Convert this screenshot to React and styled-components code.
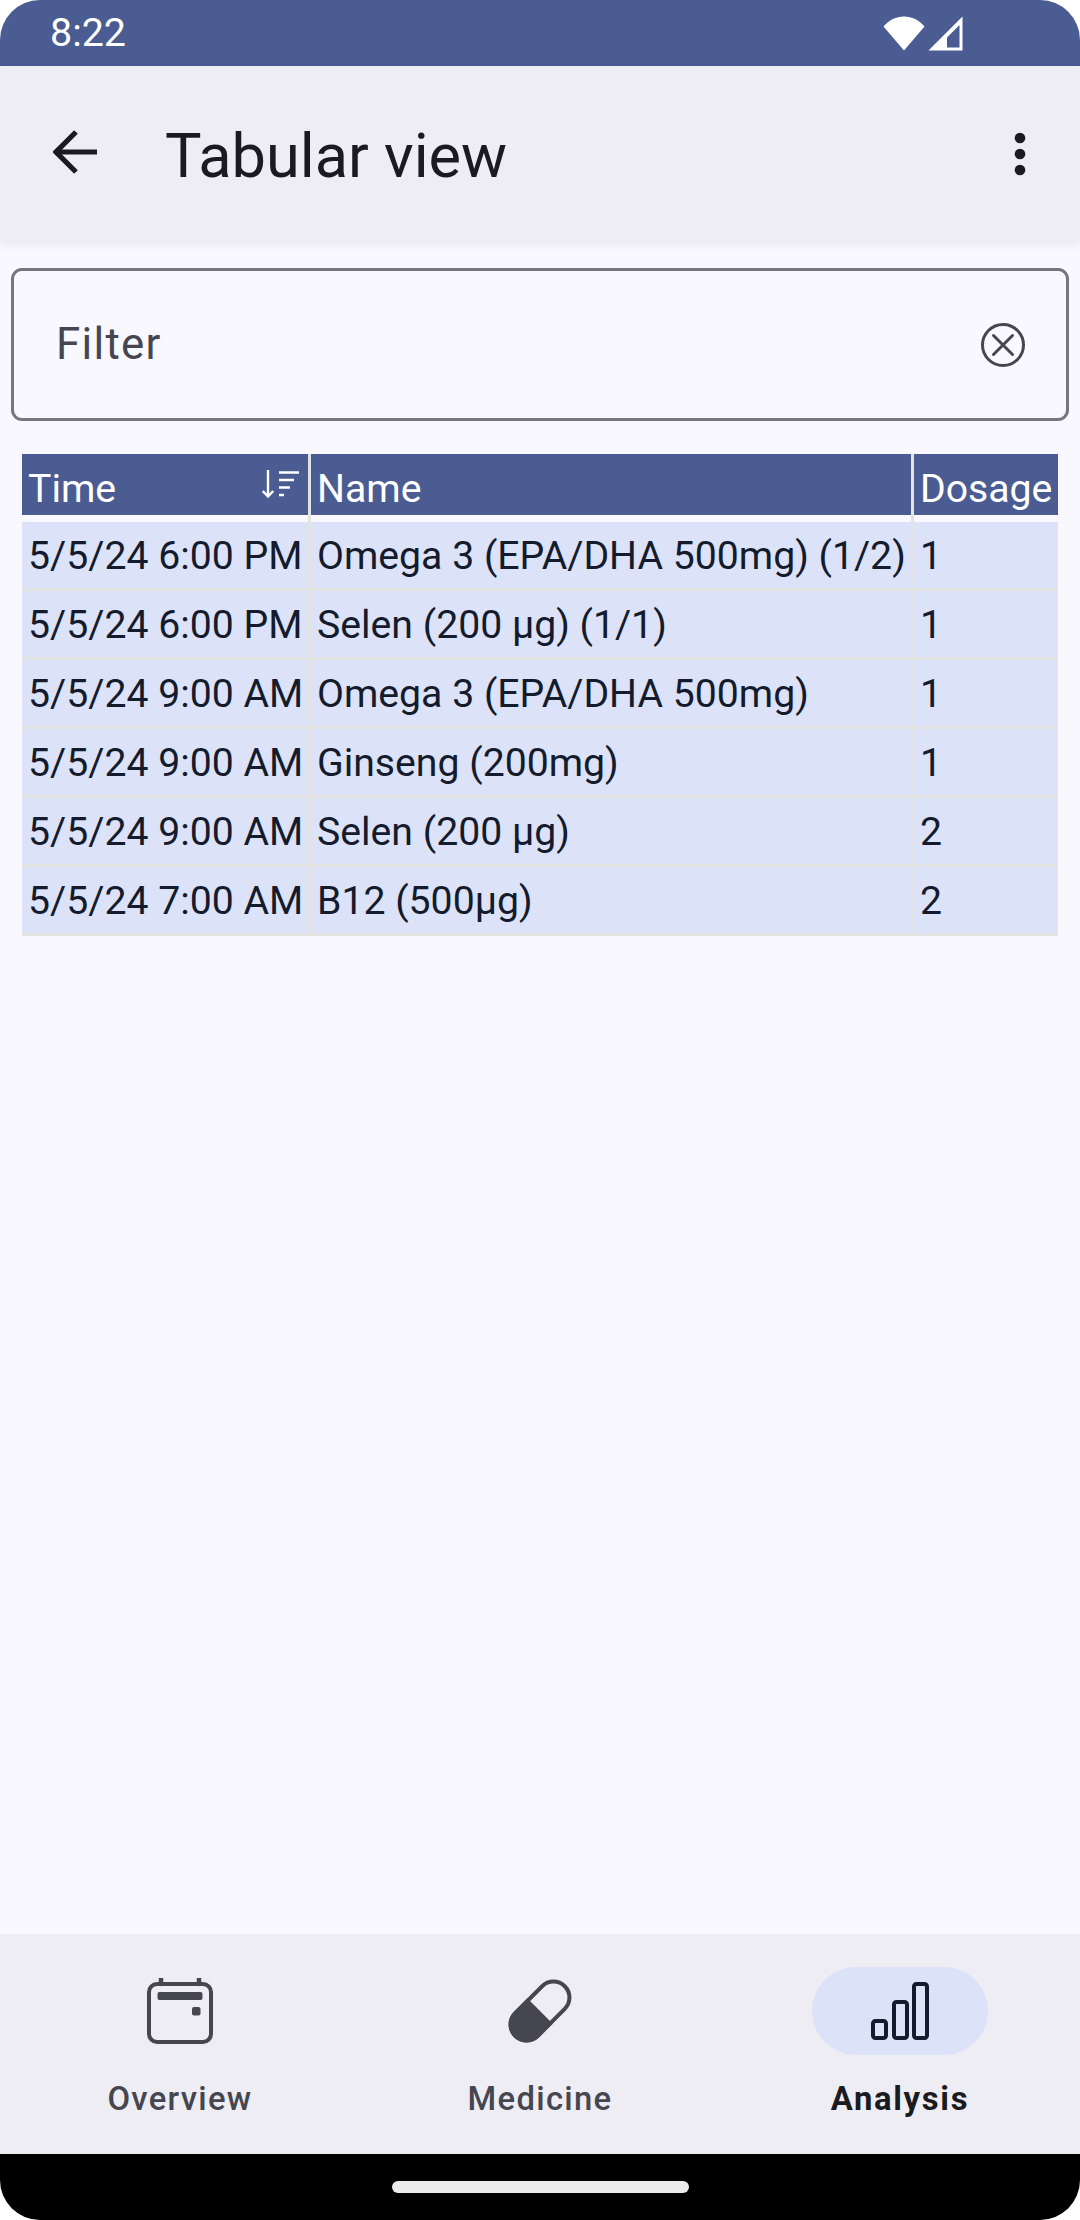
import React from "react";
import styled, { createGlobalStyle } from "styled-components";

const Global = createGlobalStyle`
  html, body { margin: 0; padding: 0; background: #ffffff; }
  * { box-sizing: border-box; }
  body { font-family: Roboto, "Noto Sans", sans-serif; }
`;

const Phone = styled.div`
  width: 1080px;
  height: 2220px;
  display: flex;
  flex-direction: column;
  overflow: hidden;
  border-radius: 40px;
  background: #faf8ff;
`;

const StatusBar = styled.header`
  height: 66px;
  flex: none;
  display: flex;
  align-items: center;
  justify-content: space-between;
  padding: 0 117px 0 50px;
  background: #4a5c92;
  color: #ffffff;
`;

const Clock = styled.span`
  font-size: 39.4px;
  line-height: 68px;
`;

const StatusIcons = styled.div`
  display: flex;
  align-items: center;
  gap: 3px;
  height: 66px;
`;

const AppBar = styled.div`
  position: relative;
  height: 176px;
  flex: none;
  display: flex;
  align-items: center;
  padding: 0 54px 0 53px;
  background: #eeedf4;
  box-shadow: 0 3px 10px rgba(30, 30, 50, 0.08);
`;

const BackIcon = styled.svg`
  width: 44px;
  height: 44px;
  flex: none;
  margin-top: -4px;
`;

const Title = styled.h1`
  flex: 1;
  margin: 4px 0 0 68px;
  font-size: 61.3px;
  font-weight: 400;
  line-height: 70px;
  color: #1a1b20;
`;

const Kebab = styled.svg`
  width: 12px;
  height: 44px;
  flex: none;
  margin-top: -1px;
`;

const Content = styled.main`
  flex: 1;
  padding: 26px 11px 0;
`;

const FilterBox = styled.div`
  height: 153px;
  display: flex;
  align-items: center;
  justify-content: space-between;
  padding: 0 41px 0 42px;
  border: 3px solid #767680;
  border-radius: 11px;
`;

const FilterLabel = styled.span`
  font-size: 43.8px;
  line-height: 52px;
  margin-top: -2px;
  letter-spacing: 1.3px;
  color: #45464f;
`;

const ClearIcon = styled.svg`
  width: 44px;
  height: 44px;
  flex: none;
`;

const Table = styled.div`
  margin: 33px 11px 0;
  display: flex;
  flex-direction: column;
`;

const Row = styled.div`
  display: grid;
  grid-template-columns: 289px 603px 144px;
`;

const HeadCell = styled.div`
  height: 68px;
  padding-bottom: 7px;
  border-right: ${(p) => (p.$last ? "none" : "3px solid #e3e3e3")};
`;

const HeadInner = styled.div`
  height: 61px;
  display: flex;
  align-items: center;
  justify-content: space-between;
  padding: 9px 9px 0 6px;
  background: #4a5c92;
  color: #ffffff;
  font-size: 39.2px;
  white-space: nowrap;
`;

const SortIcon = styled.svg`
  width: 37px;
  height: 28px;
  flex: none;
  margin-top: -10px;
`;

const Cell = styled.div`
  height: 69px;
  display: flex;
  align-items: center;
  padding: 2px 0 0 6px;
  background: #dce2f8;
  background-clip: padding-box;
  border-bottom: 3px solid #e3e3e3;
  border-right: ${(p) => (p.$last ? "none" : "3px solid #e3e3e3")};
  color: #141b2c;
  font-size: 39.2px;
  white-space: nowrap;
`;

const BottomNav = styled.nav`
  height: 220px;
  flex: none;
  display: grid;
  grid-template-columns: repeat(3, 360px);
  background: #eeedf4;
`;

const NavItem = styled.div`
  display: flex;
  flex-direction: column;
  align-items: center;
  padding-top: 33px;
`;

const IconPill = styled.div`
  width: 176px;
  height: 88px;
  display: flex;
  align-items: center;
  justify-content: center;
  border-radius: 44px;
  background: ${(p) => (p.$active ? "#dce2f8" : "transparent")};
`;

const NavLabel = styled.span`
  margin-top: 22px;
  font-size: 32.8px;
  line-height: 44px;
  letter-spacing: ${(p) => (p.$active ? "1.7px" : "1.3px")};
  font-weight: ${(p) => (p.$active ? 700 : 500)};
  color: ${(p) => (p.$active ? "#1a1b20" : "#45464f")};
`;

const GestureBar = styled.div`
  height: 66px;
  flex: none;
  display: flex;
  justify-content: center;
  padding-top: 27px;
  background: #000000;
`;

const HomePill = styled.div`
  width: 297px;
  height: 12px;
  border-radius: 6px;
  background: #ebebeb;
`;

const rows = [
  ["5/5/24 6:00 PM", "Omega 3 (EPA/DHA 500mg) (1/2)", "1"],
  ["5/5/24 6:00 PM", "Selen (200 µg) (1/1)", "1"],
  ["5/5/24 9:00 AM", "Omega 3 (EPA/DHA 500mg)", "1"],
  ["5/5/24 9:00 AM", "Ginseng (200mg)", "1"],
  ["5/5/24 9:00 AM", "Selen (200 µg)", "2"],
  ["5/5/24 7:00 AM", "B12 (500µg)", "2"],
];

const Wifi = () => (
  <svg width="42" height="36" viewBox="0 0 42 36">
    <path d="M0.5 11.5C6 5 13 1.5 21 1.5S36 5 41.500 11.500L21 35.500Z" fill="#fff" />
  </svg>
);

const Signal = () => (
  <svg width="35" height="36" viewBox="0 0 35 36">
    <path d="M0.500 35.500L34.500 1.500V35.500Z" fill="#fff" />
    <path d="M19 32.500H31.500V10L19 22.500Z" fill="#4a5c92" />
  </svg>
);

const CalendarIcon = () => (
  <svg width="66" height="66" viewBox="0 0 66 66" fill="none">
    <rect x="2" y="6" width="62" height="58" rx="8" stroke="#45464f" strokeWidth="4" />
    <path d="M14 0.500V6M52 0.500V6" stroke="#45464f" strokeWidth="4.500" strokeLinecap="round" />
    <rect x="10.500" y="14" width="45" height="8" rx="2" fill="#45464f" />
    <rect x="45" y="29" width="8.500" height="8.500" rx="2" fill="#45464f" />
  </svg>
);

const PillIcon = () => (
  <svg width="66" height="66" viewBox="0 0 66 66" fill="none">
    <g transform="rotate(-45 33 33)">
      <rect x="-2" y="17" width="70" height="32" rx="16" stroke="#45464f" strokeWidth="4" />
      <path d="M33 15H14A18 18 0 0 0 14 51H33Z" fill="#45464f" />
    </g>
  </svg>
);

const BarsIcon = () => (
  <svg width="58" height="58" viewBox="0 0 58 58" fill="none" stroke="#141b2c" strokeWidth="4">
    <rect x="2" y="39" width="13" height="17" rx="2.500" />
    <rect x="23" y="20" width="13" height="36" rx="2.500" />
    <rect x="43" y="2" width="13" height="54" rx="2.500" />
  </svg>
);

export default function App() {
  return (
    <>
      <Global />
      <Phone>
        <StatusBar>
          <Clock>8:22</Clock>
          <StatusIcons>
            <Wifi />
            <Signal />
          </StatusIcons>
        </StatusBar>
        <AppBar>
          <BackIcon viewBox="0 0 44 44" fill="none" stroke="#1a1b20" strokeWidth="5.200">
            <path d="M44 22H4" />
            <path d="M23 2L3 22L23 42" />
          </BackIcon>
          <Title>Tabular view</Title>
          <Kebab viewBox="0 0 12 44" fill="#1a1b20">
            <circle cx="6" cy="6" r="5.300" />
            <circle cx="6" cy="22" r="5.300" />
            <circle cx="6" cy="38" r="5.300" />
          </Kebab>
        </AppBar>
        <Content>
          <FilterBox>
            <FilterLabel>Filter</FilterLabel>
            <ClearIcon viewBox="0 0 44 44" fill="none" stroke="#45464f">
              <circle cx="22" cy="22" r="20.500" strokeWidth="3" />
              <path d="M12.500 12.500L31.500 31.500M31.500 12.500L12.500 31.500" strokeWidth="3" strokeLinecap="round" />
            </ClearIcon>
          </FilterBox>
          <Table>
            <Row>
              <HeadCell>
                <HeadInner>
                  Time
                  <SortIcon viewBox="0 0 37 28" fill="none" stroke="#fff" strokeWidth="2.400">
                    <path d="M6 0V26.500M0.800 21L6 26.500L11.200 21" />
                    <path d="M17 2.500H37M17 10H32M17 17.500H28M17 25H22" />
                  </SortIcon>
                </HeadInner>
              </HeadCell>
              <HeadCell>
                <HeadInner>Name</HeadInner>
              </HeadCell>
              <HeadCell $last>
                <HeadInner>Dosage</HeadInner>
              </HeadCell>
            </Row>
            {rows.map((r, i) => (
              <Row key={i}>
                <Cell>{r[0]}</Cell>
                <Cell>{r[1]}</Cell>
                <Cell $last>{r[2]}</Cell>
              </Row>
            ))}
          </Table>
        </Content>
        <BottomNav>
          <NavItem>
            <IconPill><CalendarIcon /></IconPill>
            <NavLabel>Overview</NavLabel>
          </NavItem>
          <NavItem>
            <IconPill><PillIcon /></IconPill>
            <NavLabel>Medicine</NavLabel>
          </NavItem>
          <NavItem>
            <IconPill $active><BarsIcon /></IconPill>
            <NavLabel $active>Analysis</NavLabel>
          </NavItem>
        </BottomNav>
        <GestureBar>
          <HomePill />
        </GestureBar>
      </Phone>
    </>
  );
}
